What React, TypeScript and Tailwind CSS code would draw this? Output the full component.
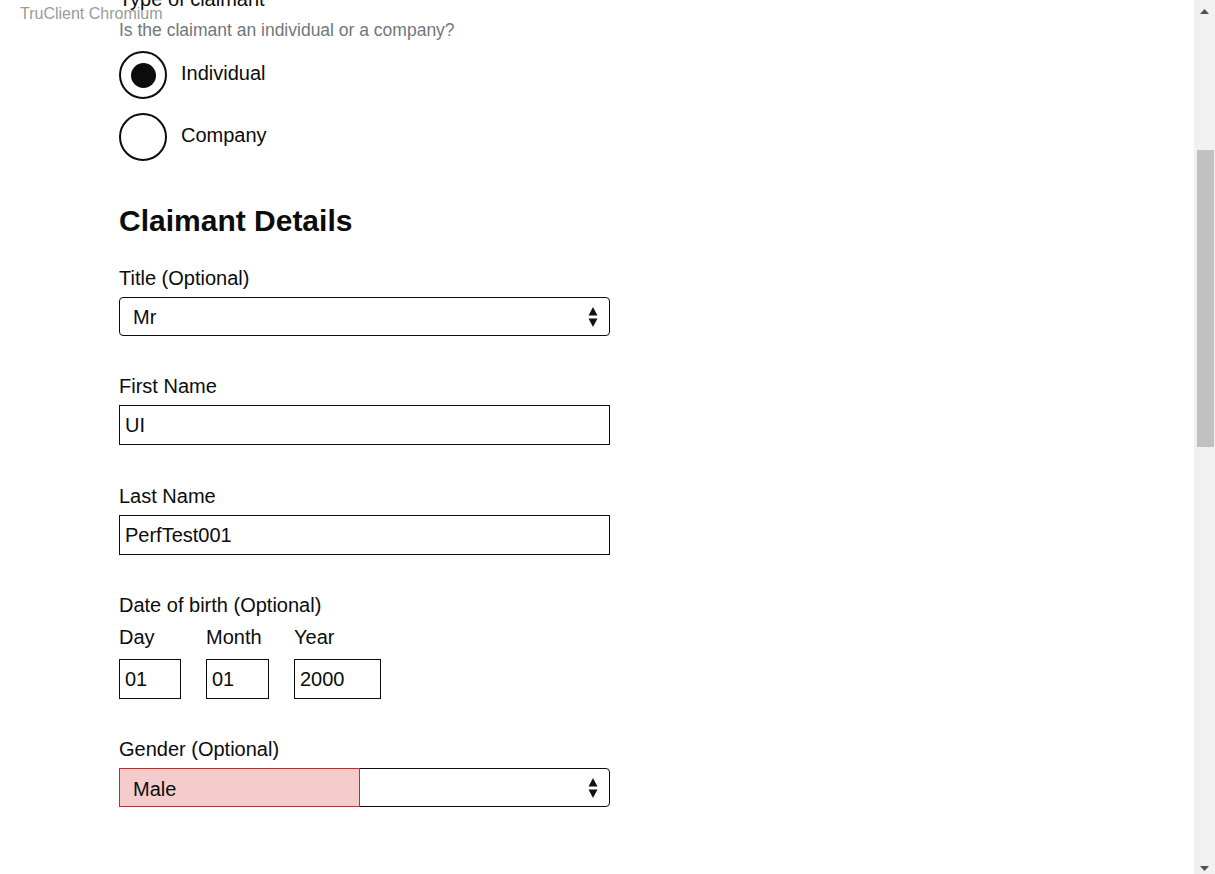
import React from "react";

function SelectArrows() {
  return (
    <svg width="10" height="22" viewBox="0 0 10 22" className="absolute right-[11px] top-1/2 -translate-y-1/2">
      <polygon points="5,1 9.5,9.5 0.5,9.5" fill="#111" />
      <polygon points="0.5,12.5 9.5,12.5 5,21" fill="#111" />
    </svg>
  );
}

function Radio({ checked, label }: { checked?: boolean; label: string }) {
  return (
    <div className="flex items-center h-[48px]">
      <div className="w-[48px] h-[48px] rounded-full border-2 border-[#0b0c0c] flex items-center justify-center bg-white">
        {checked && <div className="w-[25px] h-[25px] rounded-full bg-[#0b0c0c]" />}
      </div>
      <span className="ml-[14px] mb-[4px] text-[20px] leading-[24px] text-[#0b0c0c]">{label}</span>
    </div>
  );
}

function Label({ children, className = "" }: { children: React.ReactNode; className?: string }) {
  return <div className={"text-[20px] leading-[24px] text-[#0b0c0c] " + className}>{children}</div>;
}

function TextBox({ value, w, className = "" }: { value: string; w: string; className?: string }) {
  return (
    <div className={"h-[40px] border border-[#0b0c0c] bg-white flex items-center pl-[5px] text-[20px] text-[#0b0c0c] " + w + " " + className}>
      {value}
    </div>
  );
}

export default function App() {
  return (
    <div
      className="relative flex w-[1215px] h-[874px] overflow-hidden bg-white"
      style={{ fontFamily: '"Liberation Sans", Arial, sans-serif' }}
    >
      <div className="flex-1 pl-[119px]">
        <div className="w-[491px]">
          <div className="mt-[-13px] text-[20px] leading-[24px] text-[#0b0c0c]">Type of claimant</div>
          <div className="mt-[9px] text-[17.5px] leading-[21px] text-[#6f777b]">
            Is the claimant an individual or a company?
          </div>
          <div className="mt-[10px] flex flex-col gap-[14px]">
            <Radio checked label="Individual" />
            <Radio label="Company" />
          </div>

          <h2 className="mt-[42px] text-[30px] leading-[36px] font-bold text-[#0b0c0c]">Claimant Details</h2>

          <Label className="mt-[27px]">Title (Optional)</Label>
          <div className="relative mt-[7px] h-[39px] border border-[#0b0c0c] rounded-[4px] flex items-center pl-[13px] text-[20px] text-[#0b0c0c]">
            Mr
            <SelectArrows />
          </div>

          <Label className="mt-[38px]">First Name</Label>
          <TextBox className="mt-[7px]" w="w-full" value="UI" />

          <Label className="mt-[39px]">Last Name</Label>
          <TextBox className="mt-[7px]" w="w-full" value="PerfTest001" />

          <Label className="mt-[38px]">Date of birth (Optional)</Label>
          <div className="mt-[8px] flex gap-[25px]">
            <div className="flex flex-col">
              <Label>Day</Label>
              <TextBox className="mt-[10px]" w="w-[62px]" value="01" />
            </div>
            <div className="flex flex-col">
              <Label>Month</Label>
              <TextBox className="mt-[10px]" w="w-[63px]" value="01" />
            </div>
            <div className="flex flex-col">
              <Label>Year</Label>
              <TextBox className="mt-[10px]" w="w-[87px]" value="2000" />
            </div>
          </div>

          <Label className="mt-[38px]">Gender (Optional)</Label>
          <div className="relative mt-[7px] h-[39px] border border-[#0b0c0c] rounded-[4px] flex items-center pl-[13px] text-[20px] text-[#0b0c0c]">
            <div className="absolute left-[-1px] top-[-1px] w-[241px] h-[39px] bg-[#f4cccc] border border-[#e0201b]" />
            <span className="relative top-[1px]">Male</span>
            <SelectArrows />
          </div>
        </div>
      </div>

      <div className="relative w-[21px] h-[874px] bg-[#f1f1f1]">
        <svg width="21" height="17" viewBox="0 0 21 17" className="absolute top-0 left-0">
          <polygon points="10.5,9 15,14 6,14" fill="#505050" />
        </svg>
        <div className="absolute left-[3px] top-[150px] w-[17px] h-[297px] bg-[#c1c1c1]" />
        <svg width="21" height="17" viewBox="0 0 21 17" className="absolute bottom-0 left-0">
          <polygon points="6,9 15,9 10.5,14" fill="#505050" />
        </svg>
      </div>

      <div className="absolute left-[20px] top-[5px] text-[16px] leading-[18px] text-[#9a9a9a]">TruClient Chromium</div>
    </div>
  );
}
